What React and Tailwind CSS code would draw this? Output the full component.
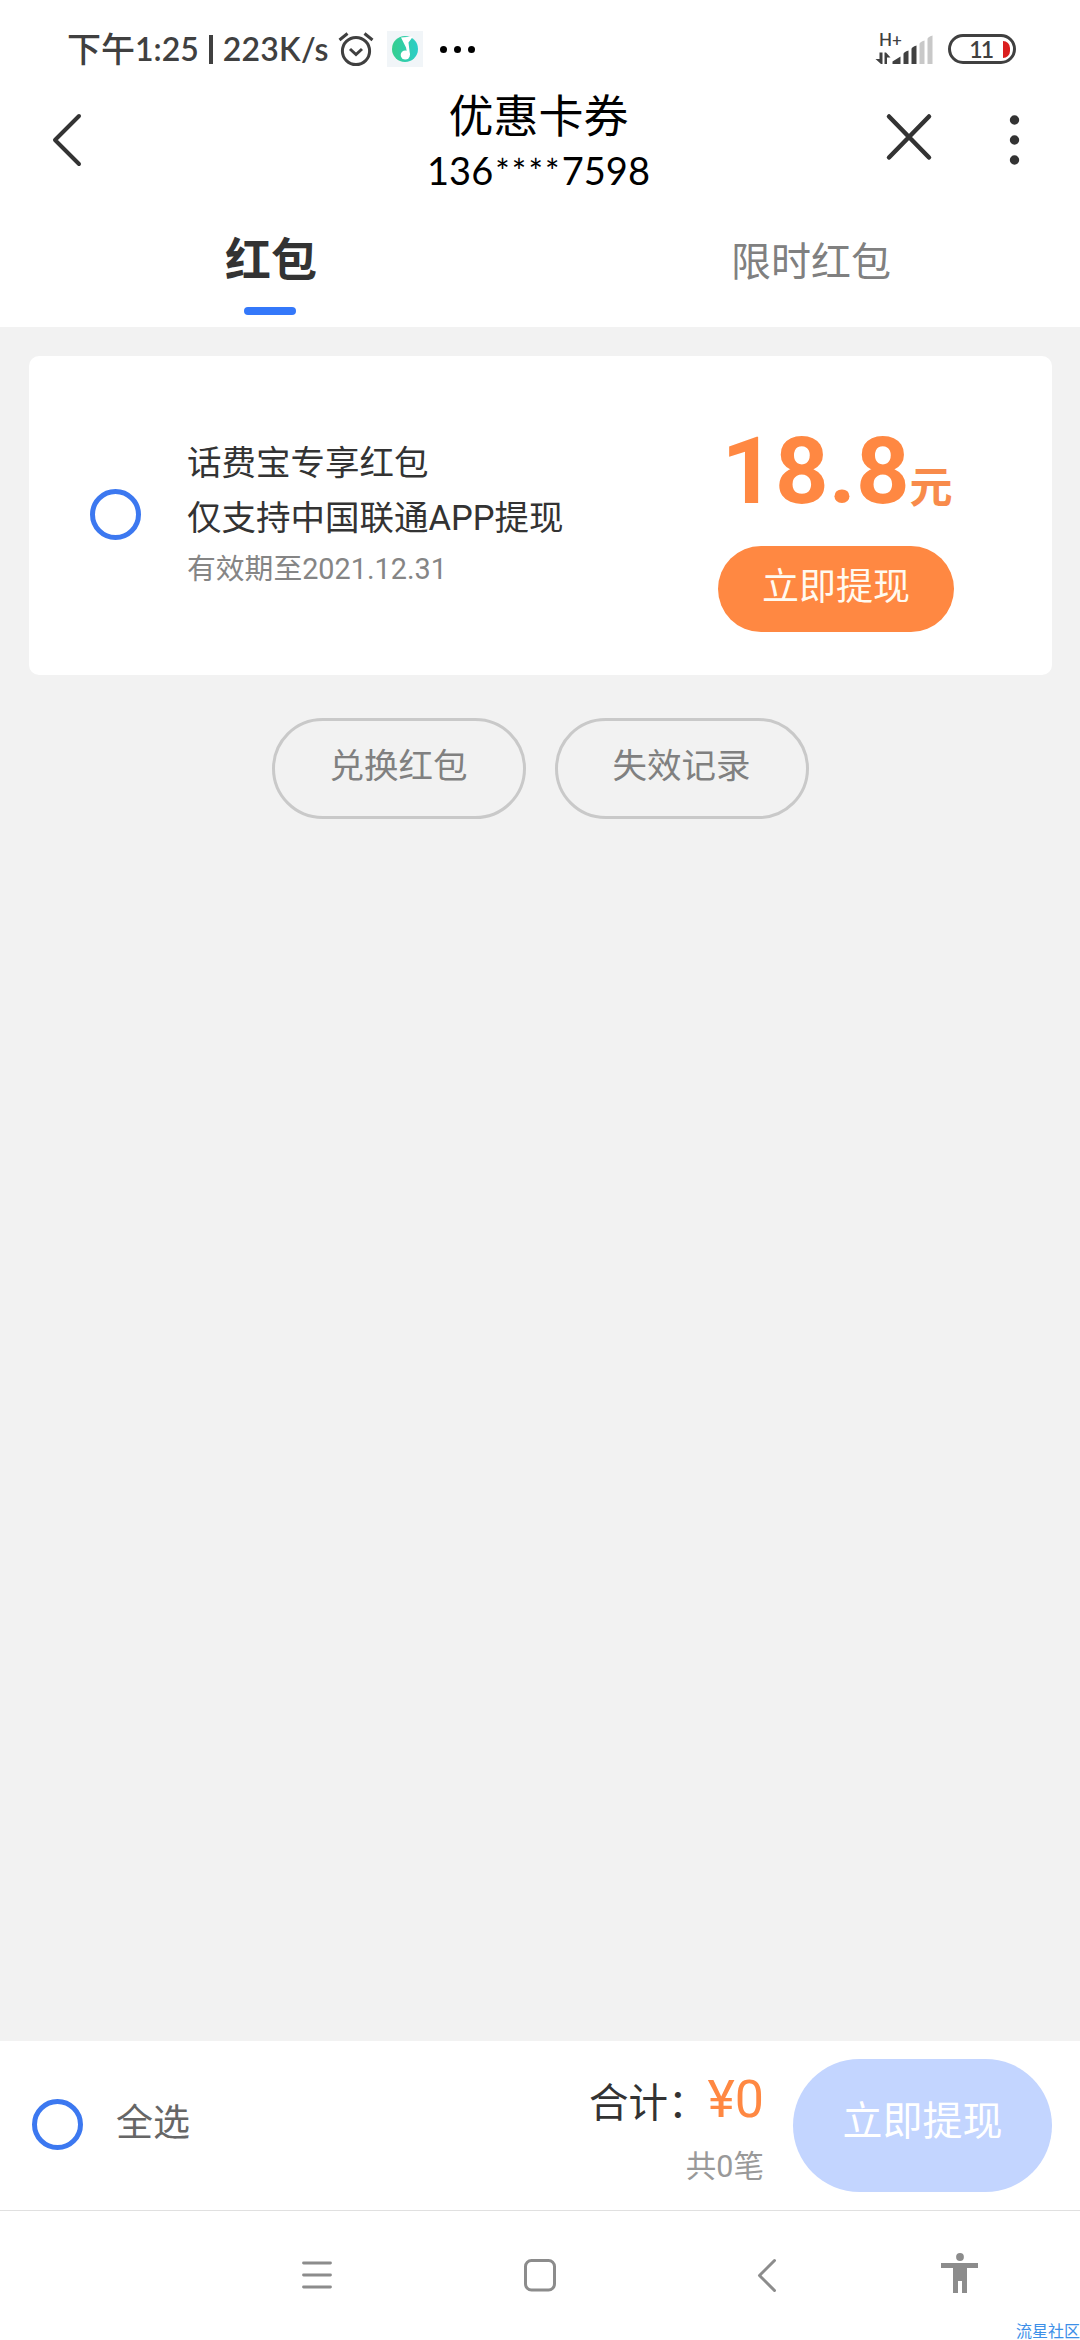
import React from 'react';

const INK = '#333333';

function StatusBar() {
  return (
    <div className="flex h-[84px] items-center pt-[14px] pr-[64px] pl-[67px]">
      <div className="flex h-9 items-center font-['Lato','Noto_Sans_CJK_SC',sans-serif] text-[32px] leading-none font-semibold whitespace-nowrap text-[#404040]">
        <span className="text-[34px] font-medium">下午</span>
        <span>1:25</span>
        <span className="mx-[10px] h-[29px] w-[4px] bg-[#404040]" />
        <span className="tracking-[0.200px]">223K/s</span>
      </div>
      <svg className="ml-[8px] h-[38px] w-[38px]" viewBox="0 0 38 38" fill="none" stroke="#404040" strokeWidth="3">
        <circle cx="19" cy="21" r="13.6" />
        <path d="M2.5 10 10.5 3.5M35.5 10 27.5 3.5" />
        <path d="M13 19l6 5.5 6-5.5" />
      </svg>
      <div className="ml-[12px] flex h-9 w-9 items-center justify-center bg-[#f1f5f8]">
        <svg className="h-7 w-7" viewBox="0 0 28 28">
          <defs>
            <linearGradient id="note" x1="0" x2="1">
              <stop offset="0" stopColor="#36cf8e" />
              <stop offset="1" stopColor="#2bcdc8" />
            </linearGradient>
          </defs>
          <circle cx="14" cy="14" r="13" fill="url(#note)" />
          <path d="M10 2.500 22 1.500 17.500 7.500 19 20h-2.500L15 12.500z" fill="#fff" />
          <circle cx="14.300" cy="20" r="4.600" fill="#fff" />
        </svg>
      </div>
      <div className="ml-[17px] flex gap-[7px]">
        <span className="h-[7px] w-[7px] rounded-full bg-black" />
        <span className="h-[7px] w-[7px] rounded-full bg-black" />
        <span className="h-[7px] w-[7px] rounded-full bg-black" />
      </div>
      <div className="ml-auto flex items-center">
        <div className="flex h-[34px] w-[60px] flex-col">
          <span className="h-[16px] pl-[4px] font-['Lato',sans-serif] text-[17px] leading-[15px] font-semibold text-[#404040]">H+</span>
          <svg className="-mt-[16px] h-[34px] w-[60px]" viewBox="0 0 60 34">
            <g fill="#404040">
              <path d="M4.500 20.500h3v11.500h-1.500l-5.500-5h4zM9.500 32V20.500h1.500l4.500 5h-3.500V32z" />
              <path d="M17.500 32v-2.500l8-5V32zM28.500 32V22q0-2 5-3.500V32zM36.500 32V17q0-2 5-3.500V32z" />
            </g>
            <path d="M44.500 32V12q0-2 5-3.500V32zM52.500 32V7q0-2 5-3.500V32z" fill="#c8c8c8" />
          </svg>
        </div>
        <div className="ml-[13px] flex h-[30px] w-[68px] items-center justify-end rounded-full border-[3px] border-[#404040] pr-[3px]">
          <span className="mr-[11px] font-['Lato',sans-serif] text-[23px] leading-none font-semibold tracking-[-2px] text-[#404040]">11</span>
          <span className="h-[17px] w-[7px] rounded-r-full bg-[#da1f1f]" />
        </div>
      </div>
    </div>
  );
}

function Header() {
  return (
    <div className="grid h-[128px] grid-cols-[1fr_auto_1fr] pr-[60px] pl-[57px]">
      <svg className="mt-[28px] -ml-[7px] h-[56px] w-[34px]" viewBox="0 0 34 56" fill="none" stroke={INK} strokeWidth="4" strokeLinecap="round" strokeLinejoin="round">
        <path d="M29 4 5 28l24 24" />
      </svg>
      <div className="flex flex-col items-center text-black">
        <h1 className="mt-[7px] font-['Noto_Sans_CJK_SC',sans-serif] text-[45px] leading-none">优惠卡券</h1>
        <p className="mt-[15px] flex font-['Lato',sans-serif] text-[38px] leading-none">
          136<span className="mt-[3px] ml-[2px] text-[34px] leading-none tracking-[2.200px]">****</span>7598
        </p>
      </div>
      <div className="mt-[27px] flex h-[58px] items-center justify-end">
        <svg className="-mt-[6px] mr-[75px] h-[50px] w-[50px]" viewBox="0 0 50 50" fill="none" stroke={INK} strokeWidth="4.500" strokeLinecap="round">
          <path d="M5 4.500 45 45.500M45 4.500 5 45.500" />
        </svg>
        <svg className="h-[52px] w-[11px]" viewBox="0 0 11 52" fill={INK}>
          <circle cx="5.500" cy="6" r="4.700" />
          <circle cx="5.500" cy="26" r="4.700" />
          <circle cx="5.500" cy="46" r="4.700" />
        </svg>
      </div>
    </div>
  );
}

function Tabs() {
  return (
    <div className="grid h-[115px] grid-cols-2">
      <div className="flex flex-col items-center">
        <span className="mt-[25px] ml-[2px] text-[46px] leading-none font-bold text-[#333]">红包</span>
        <span className="mt-[24px] h-[8px] w-[52px] rounded-full bg-[#3478fa]" />
      </div>
      <div className="flex flex-col items-center">
        <span className="mt-[31px] ml-[2px] text-[40px] leading-none text-[#808080]">限时红包</span>
      </div>
    </div>
  );
}

function Coupon() {
  return (
    <section className="mt-[29px] mr-[28px] ml-[29px] flex h-[319px] rounded-[10px] bg-white">
      <button className="mt-[133px] ml-[61px] h-[51px] w-[51px] shrink-0 rounded-full border-[5px] border-[#3c78f0]" />
      <div className="mt-[80px] ml-[46px] flex flex-col whitespace-nowrap">
        <p className="text-[34.500px] leading-[55px] text-[#333]">
          话费宝专享红包
          <br />
          仅支持中国联通APP提现
        </p>
        <p className="mt-[2px] text-[28.800px] leading-[42px] text-[#858585]">有效期至2021.12.31</p>
      </div>
      <div className="mr-[98px] ml-auto flex w-[236px] flex-col items-center text-[#ff8842]">
        <p className="mt-[69px] ml-[2px] flex h-[121px] items-baseline whitespace-nowrap">
          <span className="text-[93.500px] leading-none font-bold">18.8</span>
          <span className="text-[43px] leading-none font-bold text-[#f88b4b]">元</span>
        </p>
        <button className="h-[86px] w-[236px] rounded-full bg-[#ff8842] pb-[4px] text-[37px] leading-none text-[#fffaf0]">立即提现</button>
      </div>
    </section>
  );
}

function BottomBar() {
  return (
    <div className="flex h-[170px] border-b border-[#e0e0e0] bg-white pr-[28px] pl-[32px]">
      <button className="mt-[58px] h-[51px] w-[51px] rounded-full border-[5px] border-[#3c78f0]" />
      <span className="mt-[64px] ml-[33px] text-[37px] leading-none text-[#666]">全选</span>
      <div className="mr-[29px] ml-auto flex flex-col items-end">
        <p className="mt-[33px] flex items-baseline text-[39.500px] leading-[52px] text-[#333]">
          合计：<span className="text-[52px] leading-none text-[#ff8842]">¥0</span>
        </p>
        <p className="mt-[22px] text-[30.500px] leading-none text-[#999]">共0笔</p>
      </div>
      <button className="mt-[18px] h-[133px] w-[259px] rounded-full bg-[#c3d5ff] pb-[7px] text-[40px] leading-none text-white">立即提现</button>
    </div>
  );
}

function SystemNav() {
  return (
    <div className="relative flex h-[129px] items-start overflow-hidden bg-white pt-[40px] pl-[300px]">
      <svg className="h-[48px] w-[34px]" viewBox="0 0 34 48" stroke="#8c8c8c" strokeWidth="2.800" strokeLinecap="round">
        <path d="M3.500 12h27M3.500 24h27M3.500 36h27" />
      </svg>
      <svg className="ml-[188px] h-[48px] w-[36px]" viewBox="0 0 36 48" fill="none" stroke="#8c8c8c" strokeWidth="3">
        <rect x="3.500" y="9.500" width="29" height="29.500" rx="6" />
      </svg>
      <svg className="ml-[196px] h-[48px] w-[26px]" viewBox="0 0 26 48" fill="none" stroke="#8c8c8c" strokeWidth="3" strokeLinecap="round" strokeLinejoin="round">
        <path d="M20.500 9.500 5.500 24.500l15 15" />
      </svg>
      <svg className="ml-[160px] h-[48px] w-[40px]" viewBox="0 0 40 48" fill="#8c8c8c">
        <circle cx="20" cy="6" r="3.900" />
        <path d="M1 12h37v5H27v25h-5V30h-4v12h-5V17H1z" />
      </svg>
      <span className="absolute right-0 bottom-0 text-[16px] leading-none whitespace-nowrap text-[#3d8fe8]">流星社区</span>
    </div>
  );
}

export default function App() {
  return (
    <main className="flex h-[2340px] w-[1080px] flex-col overflow-hidden bg-[#f2f2f2] font-['Roboto','Noto_Sans_CJK_SC',sans-serif]">
      <header className="bg-white">
        <StatusBar />
        <Header />
        <Tabs />
      </header>
      <Coupon />
      <div className="mt-[43px] flex justify-center gap-[29px]">
        <button className="h-[101px] w-[254px] rounded-full border-[3px] border-[#c9c9c9] pb-[4px] text-[34.500px] leading-none text-[#808080]">兑换红包</button>
        <button className="h-[101px] w-[254px] rounded-full border-[3px] border-[#c9c9c9] pb-[4px] text-[34.500px] leading-none text-[#808080]">失效记录</button>
      </div>
      <div className="flex-1" />
      <BottomBar />
      <SystemNav />
    </main>
  );
}
